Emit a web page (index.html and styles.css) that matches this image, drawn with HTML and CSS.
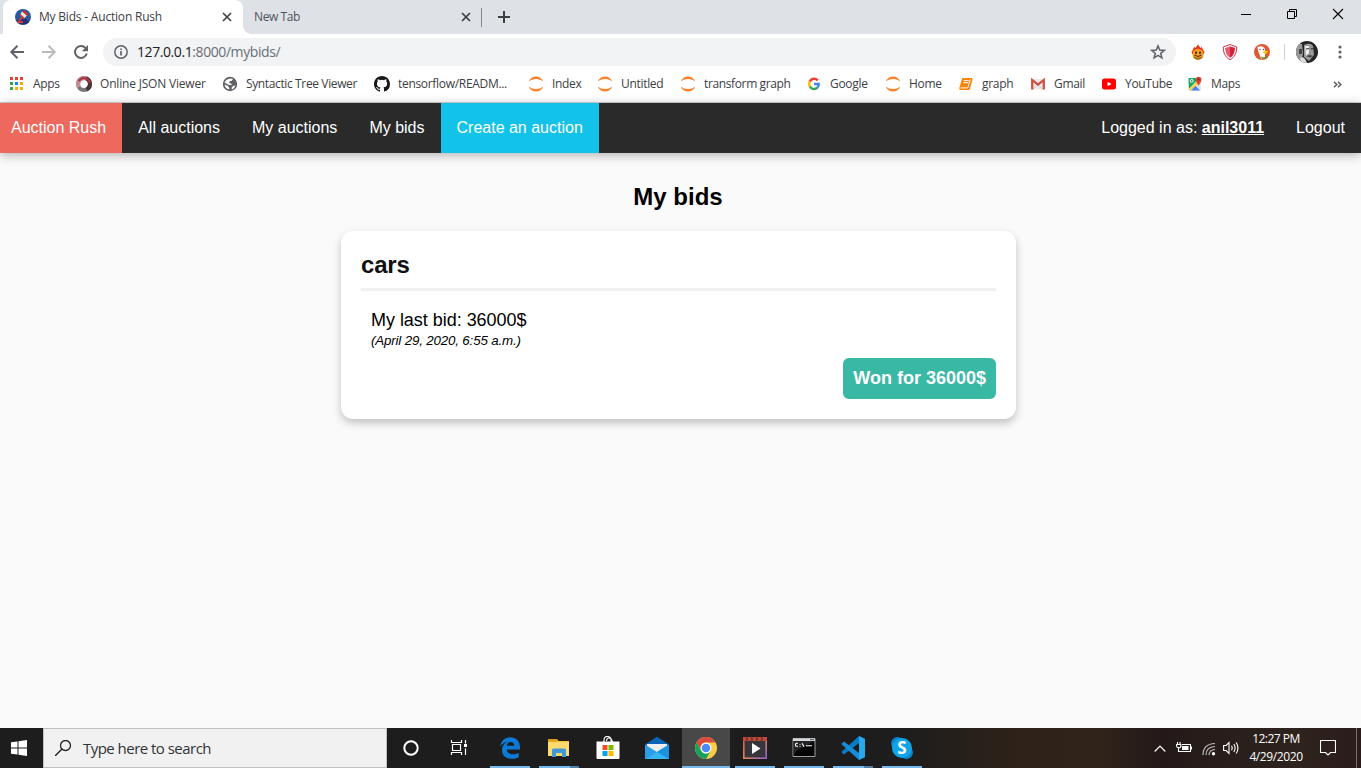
FILE: index.html
```html
<!DOCTYPE html>
<html lang="en">
<head>
<meta charset="utf-8">
<title>My Bids - Auction Rush</title>
<link rel="stylesheet" href="styles.css">
</head>
<body>
<svg class="defs" width="0" height="0">
  <symbol id="jupyter" viewBox="0 0 16 16"><path d="M.7 5.600C2 2.300 4.800 .5 8 .5s6 1.800 7.300 5.100C13.300 3.900 10.800 3 8 3S2.700 3.900 .7 5.600zM.7 10.600c1.300 3.200 4.100 5 7.300 5s6-1.800 7.300-5c-2 1.700-4.500 2.500-7.300 2.500s-5.300-.8-7.300-2.500z" fill="#f9822f"/></symbol>
</svg>
<div class="screen">
  <header class="browser">
    <div class="tabs">
      <div class="tab active">
        <svg class="i16" viewBox="0 0 16 16"><circle cx="8" cy="8" r="8" fill="#2b5a9b"/><path d="M1 11a8 8 0 0 0 13 2l-4-4z" fill="#252f73"/><path d="M3.500 12.500 8.500 7" stroke="#e7352f" stroke-width="1.800"/><path d="m7 2.500 5 4-3 3-4-3.500z" fill="#f5e7dc"/><path d="m9 1 4.500 4.500-1.500 1.500L7.800 2.500z" fill="#d82f30"/><path d="m5.500 5 4 4-1 1-4-4z" fill="#d82f30"/><path d="M2 13.500 8 13" stroke="#e3483e" stroke-width="1.500"/></svg>
        <span class="tab-title">My Bids - Auction Rush</span>
        <svg class="close" viewBox="0 0 10 10"><path d="m1 1 8 8M9 1 1 9" stroke="#3c4043" stroke-width="1.700"/></svg>
      </div>
      <div class="tab idle">
        <span class="tab-title">New Tab</span>
        <svg class="close" viewBox="0 0 10 10"><path d="m1 1 8 8M9 1 1 9" stroke="#3c4043" stroke-width="1.700"/></svg>
      </div>
      <svg class="plus" viewBox="0 0 12 12"><path d="M6 0v12M0 6h12" stroke="#3c4043" stroke-width="2"/></svg>
      <div class="window-buttons">
        <svg viewBox="0 0 12 12"><path d="M1 6.500h10" stroke="#000"/></svg>
        <svg viewBox="0 0 12 12"><path d="M1.500 3.500h7v7h-7zM3.500 3V1.500h7v7H9" fill="none" stroke="#000"/></svg>
        <svg viewBox="0 0 12 12"><path d="m1 1 10 10M11 1 1 11" stroke="#000" stroke-width="1.100"/></svg>
      </div>
    </div>
    <div class="toolbar">
      <svg class="nav-icon" viewBox="0 0 16 16"><path d="M15 8H2.500M8.500 1.800 2.300 8l6.200 6.200" fill="none" stroke="#5f6368" stroke-width="2"/></svg>
      <svg class="nav-icon" viewBox="0 0 16 16"><path d="M1 8h12.500M7.500 1.800 13.700 8l-6.200 6.200" fill="none" stroke="#babcbe" stroke-width="2"/></svg>
      <svg class="nav-icon" viewBox="0 0 16 16"><path d="M13.800 9.500a6 6 0 1 1-1.300-5.600" fill="none" stroke="#5f6368" stroke-width="2"/><path d="M15 1v6.200H8.800z" fill="#5f6368"/></svg>
      <div class="omnibox">
        <svg class="i14" viewBox="0 0 14 14"><circle cx="7" cy="7" r="6.200" fill="none" stroke="#5f6368" stroke-width="1.500"/><path d="M7 6v4.500M7 3.500V5" stroke="#5f6368" stroke-width="1.700"/></svg>
        <span class="url"><span class="host">127.0.0.1</span>:8000/mybids/</span>
        <svg class="i16" viewBox="0 0 16 16"><path d="m8 1.900 1.700 4.200 4.500.3-3.500 2.900 1.200 4.500L8 11.300l-3.900 2.500 1.200-4.500-3.500-2.900 4.500-.3z" fill="none" stroke="#5f6368" stroke-width="1.500"/></svg>
      </div>
      <div class="extensions">
        <svg class="i16" viewBox="0 0 16 16"><path d="M8 0c.5 2 2 2.500 2.300 4l1.200-1.200c.2 1.500 2 2.500 1.800 4l1-.4c0 1 .2 2-.5 3.600H2.300C1.500 8.500 1.700 7.400 2 6.400l.8.4C2.500 5 4 4 4.300 2.800L5.500 4C6 2.600 7.600 2 8 0z" fill="#e8361c"/><circle cx="8" cy="10.200" r="5.500" fill="#f4a01b"/><path d="M2.700 12.300a5.800 5.800 0 0 0 10.600 0Q8 15.200 2.700 12.300z" fill="#a86b16"/><ellipse cx="6" cy="8.800" rx="1" ry="1.300" fill="#3d2510"/><ellipse cx="10" cy="8.800" rx="1" ry="1.300" fill="#3d2510"/><path d="M4.500 11.200q3.500 2.500 7 0" fill="none" stroke="#3d2510"/></svg>
        <svg class="i16" viewBox="0 0 16 16"><path d="M8 .5 14.700 3c0 6-1.700 10-6.700 12.700C3 13 1.300 9 1.300 3z" fill="#fff" stroke="#dc2d45"/><path d="M8 2.500 12.900 4c-.2 4.500-1.500 7.500-4.900 9.700C4.600 11.500 3.300 8.500 3.100 4z" fill="#e45c70"/><path d="M8 2.500 12.900 4c-.2 4.500-1.500 7.500-4.900 9.700z" fill="#d91f3a"/></svg>
        <svg class="i16" viewBox="0 0 16 16"><circle cx="8" cy="8" r="8" fill="#de5833"/><path d="M3.500 3C6 1.500 11 2 11 6v7l-3.700 2.500C6.500 12 3.500 7 3.500 3z" fill="#fff"/><circle cx="9.500" cy="5.500" r=".8" fill="#2d4f8e"/><circle cx="6" cy="5.500" r=".7" fill="#2d4f8e"/><path d="M9 7.800c2-1.500 4-1 5.500 0-1 .8-2 .7-2.800 1l1.300.8c-1.500.8-4.500.2-4-1.800z" fill="#fdd20a"/><path d="m7 12.500 3 1 2.500-1.500-.2 3-2-.7-2.500.8z" fill="#45a331"/></svg>
      </div>
      <svg class="avatar" viewBox="0 0 22 22"><clipPath id="round"><circle cx="11" cy="11" r="11"/></clipPath><g clip-path="url(#round)"><path d="M0 0h22v22H0z" fill="#262626"/><path d="M0 5q3-3 6-2l1 10-2 8H0z" fill="#999"/><path d="M3 8h3v5H3z" fill="#444"/><path d="M8 4q7-3 9 1l1 9-5 6-5-4z" fill="#9a9a9a"/><path d="M9 5h4v7l-3 3z" fill="#ededed"/><path d="m10 8 3-.5M14.500 8l3-.5" stroke="#333" stroke-width="1.200"/><path d="m10 15 4-1 3 1-3 1.500z" fill="#444"/><path d="M4 17q4-3 7 5H5z" fill="#ddd"/></g></svg>
      <svg class="kebab" viewBox="0 0 4 14"><g fill="#5f6368"><circle cx="2" cy="2" r="1.600"/><circle cx="2" cy="7" r="1.600"/><circle cx="2" cy="12" r="1.600"/></g></svg>
    </div>
    <div class="bookmarks">
      <div class="bm"><svg class="i16" viewBox="0 0 16 16"><path d="M1 1h3v3H1zm5 0h3v3H6zm5 0h3v3h-3z" fill="#ea4335"/><path d="M1 6h3v3H1zm0 5h3v3H1z" fill="#34a853"/><path d="M6 6h3v3H6z" fill="#1e88f5"/><path d="M11 6h3v3h-3zm-5 5h3v3H6zm5 0h3v3h-3z" fill="#fbab05"/></svg><span>Apps</span></div>
      <div class="bm"><svg class="i16" viewBox="0 0 16 16"><circle cx="8" cy="8" r="6" fill="none" stroke="#777" stroke-width="4"/><path d="M10 2.400A6 6 0 0 1 10.500 13.500" fill="none" stroke="#443735" stroke-width="4"/><path d="M3 11A6 6 0 0 1 10 2.400" fill="none" stroke="#c98c91" stroke-width="4"/><path d="M2.500 5Q6 .8 10 2.500q3 1 4 4.500" fill="none" stroke="#a93544" stroke-width="2"/></svg><span>Online JSON Viewer</span></div>
      <div class="bm"><svg class="i16" viewBox="0 0 16 16"><circle cx="8" cy="8" r="7.200" fill="#5f6368"/><path d="M8.500 2.500 11 3 9.500 5H8L7 7l2 .5 1 1.500H7L5 8 2.500 6.500Q4 3 8.500 2.500zM2.500 8.500 6 10l1 1.500.5 2Q3.500 13 2.500 8.500zM11 10l2.500-.5Q12.500 12.500 10 13.500L9.500 12z" fill="#fff"/></svg><span>Syntactic Tree Viewer</span></div>
      <div class="bm"><svg class="i16" viewBox="0 0 16 16"><path fill="#191717" d="M8 0C3.580 0 0 3.580 0 8c0 3.540 2.290 6.530 5.470 7.590.4.070.55-.17.55-.38 0-.19-.01-.82-.01-1.490-2.010.37-2.530-.49-2.690-.94-.09-.23-.48-.94-.82-1.130-.28-.15-.68-.52-.01-.53.63-.01 1.080.58 1.230.82.72 1.210 1.870.87 2.330.66.070-.52.28-.87.51-1.070-1.780-.2-3.640-.89-3.640-3.950 0-.87.31-1.590.82-2.150-.08-.2-.36-1.020.08-2.120 0 0 .67-.21 2.200.82a7.600 7.600 0 0 1 4 0c1.530-1.040 2.200-.82 2.200-.82.44 1.100.16 1.920.08 2.120.51.56.82 1.270.82 2.150 0 3.070-1.870 3.750-3.650 3.950.29.25.54.73.54 1.480 0 1.070-.01 1.930-.01 2.200 0 .21.15.46.55.38A8.010 8.010 0 0 0 16 8c0-4.420-3.580-8-8-8z"/></svg><span>tensorflow/READM...</span></div>
      <div class="bm"><svg class="i16"><use href="#jupyter"/></svg><span>Index</span></div>
      <div class="bm"><svg class="i16"><use href="#jupyter"/></svg><span>Untitled</span></div>
      <div class="bm"><svg class="i16"><use href="#jupyter"/></svg><span>transform graph</span></div>
      <div class="bm"><svg class="i16" viewBox="0 0 16 16"><g fill="none" stroke-width="2.500"><path d="M11.800 4.300A4.900 4.900 0 0 0 3.800 5.500" stroke="#ea4335"/><path d="M3.800 5.500a4.900 4.900 0 0 0 0 5" stroke="#fbbc05"/><path d="M3.800 10.500a4.900 4.900 0 0 0 7.600 1.200" stroke="#34a853"/><path d="M11.400 11.700A4.600 4.600 0 0 0 12.700 8H8" stroke="#4285f4"/></g></svg><span>Google</span></div>
      <div class="bm"><svg class="i16"><use href="#jupyter"/></svg><span>Home</span></div>
      <div class="bm"><svg class="i16" viewBox="0 0 16 16"><path d="M4.500 2H14l.500 1.500L12 13q-.3 1-1.500 1H2.500Q1 14 1.300 12L4 3z" fill="#f98307"/><path d="M5.800 4.600h5M5.200 6.700h5M2.500 11.900h7.300l2.500-8.500" fill="none" stroke="#fff"/></svg><span>graph</span></div>
      <div class="bm"><svg class="i16" viewBox="0 0 16 16"><path d="M2 3h12v10.500H2z" fill="#eaeaea"/><path d="m3 13 5-4 5 4" fill="none" stroke="#ccc"/><path d="M2.200 13.500V4L8 8.700 13.800 4v9.500" fill="none" stroke="#d54b3d" stroke-width="2.200"/></svg><span>Gmail</span></div>
      <div class="bm"><svg class="i16" viewBox="0 0 16 16"><rect x="1" y="2.500" width="14" height="11" rx="2.500" fill="#f00"/><path d="m6.500 5.700 4 2.300-4 2.300z" fill="#fff"/></svg><span>YouTube</span></div>
      <div class="bm"><svg class="i16" viewBox="0 0 16 16"><path d="M1.500 2h12v12.500h-12z" fill="#d8dce0"/><path d="M1.500 2H12L2 13z" fill="#1fa463"/><path d="m3 14.500 5-5 5 5z" fill="#4285f4"/><path d="m2 13 9-9 1.500 1.500L3.500 15" fill="#fdd835"/><path d="m9 9 4.500 5V9z" fill="#dfe1e5"/><circle cx="4.700" cy="4.800" r="1.400" fill="none" stroke="#fff"/><path d="M11.500 10C11 7.500 8.700 6.500 8.700 3.700a2.900 2.900 0 0 1 5.800 0c0 2.800-2.500 3.800-3 6.300z" fill="#db4437"/><circle cx="11.600" cy="3.600" r="1" fill="#7b231e"/></svg><span>Maps</span></div>
      <svg class="overflow" viewBox="0 0 9 7"><path d="m1 .7 2.800 2.800L1 6.300M5 .7l2.800 2.800L5 6.300" fill="none" stroke="#5f6368" stroke-width="1.600"/></svg>
    </div>
  </header>

  <nav class="site-nav">
    <a class="brand">Auction Rush</a>
    <a>All auctions</a>
    <a>My auctions</a>
    <a>My bids</a>
    <a class="create">Create an auction</a>
    <span class="user">Logged in as: <b>anil3011</b></span>
    <a>Logout</a>
  </nav>

  <main class="page">
    <h1>My bids</h1>
    <article class="card">
      <h2>cars</h2>
      <div class="bid">My last bid: 36000$</div>
      <div class="date">(April 29, 2020, 6:55 a.m.)</div>
      <div class="won">Won for 36000$</div>
    </article>
  </main>

  <footer class="taskbar">
    <div class="start"><svg class="i16" viewBox="0 0 16 16"><path d="M0 2.300 6.500 1.400v6.100H0zM7.500 1.200 16 0v7.500H7.500zM0 8.500h6.500v6.100L0 13.700zM7.500 8.500H16V16l-8.500-1.200z" fill="#fff"/></svg></div>
    <div class="search">
      <svg viewBox="0 0 16 16"><circle cx="10.500" cy="5.500" r="5" fill="none" stroke="#222" stroke-width="1.300"/><path d="M7 9 0 16" stroke="#222" stroke-width="1.400"/></svg>
      <span>Type here to search</span>
    </div>
    <div class="apps">
      <div class="app"><svg viewBox="0 0 24 24"><circle cx="12" cy="12" r="6.700" fill="none" stroke="#fff" stroke-width="2"/></svg></div>
      <div class="app"><svg viewBox="0 0 24 24"><path d="M3.500 4v2.500h10V4M3.500 19v-2.500h10V19M4.500 8.500h8v6h-8zM17.500 4v3.500M17.500 12.500V19" fill="none" stroke="#fff" stroke-width="1.200"/><path d="M16 8h3v3h-3z" fill="#fff"/></svg></div>
      <div class="app open shift"><svg viewBox="0 0 24 24"><path d="M2 10.500C3.300 4.500 7 1.200 12.300 1.200c6 0 9.700 4.200 9.700 10v2.300H8.700c.3 3.300 3.200 4.700 6.200 4.700 2.200 0 4-.5 5.800-1.500v4.500c-2 1-4.300 1.600-6.900 1.600-6 0-9.800-3.500-9.800-8.800 0-3.800 2-6.800 5.400-8.400C6 6.500 3.700 8.300 2 10.500zm6.700-.8h7.500c0-2.300-1.300-3.700-3.500-3.700-2 0-3.500 1.400-4 3.700z" fill="#0b7ad7"/></svg></div>
      <div class="app open multi"><svg viewBox="0 0 24 24"><path d="M1 3h9l1.500 2H22v15H1z" fill="#f5bd35"/><path d="M1 6h21v14H1z" fill="#ffda6c"/><path d="M1 3h9v2.500H1z" fill="#dc9e13"/><path d="M5 21v-7q0-1.500 1.500-1.500h11q1.500 0 1.500 1.500v7h-4v-4H9v4z" fill="#3f99d8"/></svg></div>
      <div class="app"><svg viewBox="0 0 24 24"><path d="M8 6V4q0-3.500 3.500-3.500T15 4v2M10.500 5q0-3 2.500-3t3.500 4" fill="none" stroke="#fff" stroke-width="1.100"/><path d="M.5 5.500h23V22q0 1-1 1h-21q-1 0-1-1z" fill="#fff"/><path d="M6.500 9h5v5h-5z" fill="#f04e24"/><path d="M12.500 9h5v5h-5z" fill="#7db900"/><path d="M6.500 15h5v5h-5z" fill="#00a3ee"/><path d="M12.500 15h5v5h-5z" fill="#ffb800"/></svg></div>
      <div class="app"><svg viewBox="0 0 24 24"><path d="M0 8.500 12 .8l12 7.700V23H0z" fill="#0865b5"/><path d="M2 8h20v8H2z" fill="#eee"/><path d="M0 8.500 12 16 0 23z" fill="#2d9de5"/><path d="M24 8.500V23H0z" fill="#36b6f3"/><path d="m12 16 12 7V8.500z" fill="#1b91e0"/></svg></div>
      <div class="app open current"><svg viewBox="0 0 24 24"><circle cx="12" cy="12" r="11" fill="#fbcd43"/><path d="M2.500 6.500A11 11 0 0 1 21.500 6.500H12A5.500 5.500 0 0 0 7.200 14.700z" fill="#db4a3d"/><path d="M2.500 6.500A11 11 0 0 0 12 23l4.800-8.300a5.500 5.500 0 0 1-9.600 0z" fill="#18a05e"/><circle cx="12" cy="12" r="5.500" fill="#fff"/><circle cx="12" cy="12" r="4.300" fill="#4a8af4"/></svg></div>
      <div class="app open"><svg viewBox="0 0 24 24"><defs><linearGradient id="film" x1="0" y1="0" x2="1" y2="1"><stop stop-color="#d9564a"/><stop offset=".5" stop-color="#e88457"/><stop offset="1" stop-color="#8f62cf"/></linearGradient></defs><rect x=".8" y="1.800" width="22.400" height="20.400" fill="#35353b" stroke="url(#film)" stroke-width="1.600"/><path d="M0 1h24v4H0z" fill="#c4493a"/><path d="m3 1 1.500 2L3 5m5-4 1.500 2L8 5m5-4 1.500 2L13 5m5-4 1.500 2L18 5" fill="none" stroke="#78352b" stroke-width="1.600"/><path d="M9 7v11l8.500-5.500z" fill="#fff"/></svg></div>
      <div class="app open"><svg viewBox="0 0 24 24"><path d="M1 2.500h22v18H1z" fill="#050505" stroke="#9ba0a2"/><path d="M1 2.500h22v2.500H1z" fill="#d6dadd"/><path d="M18 3.700h4" stroke="#555"/><path d="M1.500 5h21L4 15l-2.500 5z" fill="#262626"/><path d="M6 7.300H4.500q-1 0-1 1v1q0 1 1 1H6M8 8v.7M8 10v.7M10 7.300l2 3.500M14 9.800h6" fill="none" stroke="#fff" stroke-width="1.100"/></svg></div>
      <div class="app open multi"><svg viewBox="0 0 24 24"><path d="m18 0 6 2.700v18.600L18 24z" fill="#27a9f2"/><path d="M18 0v7L3 18.500.3 16z" fill="#087bc3"/><path d="M18 24v-7L3 5.500.3 8z" fill="#168dd8"/></svg></div>
      <div class="app open"><svg viewBox="0 0 24 24"><circle cx="7.500" cy="7.500" r="6.500" fill="#0a84cf"/><circle cx="16.500" cy="16.500" r="6.500" fill="#0a84cf"/><circle cx="12" cy="12" r="10" fill="#10a5e7"/></svg><b class="skype-s">S</b></div>
    </div>
    <div class="tray">
      <svg class="chevron" viewBox="0 0 12 7"><path d="m.7 6.500 5.300-5.300 5.300 5.300" fill="none" stroke="#fff" stroke-width="1.200"/></svg>
      <svg class="i16" viewBox="0 0 16 16"><path d="M6 4.500h8.500v7H5M15.500 6.500v3M2.500 8v3.500H5M1.500 2v2.500M4 2v2.500M.6 4.500h4.300v1.500q0 1.800-2.100 1.800T.6 6z" fill="none" stroke="#fff" stroke-width="1.100"/><path d="M6 6h6.500v4H6z" fill="#fff"/></svg>
      <svg class="wifi" viewBox="0 0 14 14"><g fill="none" stroke="#bbb" stroke-width="1.200"><path d="M1 13Q1 2 13 1.500M4 13Q4 5 13 4.500M7 13q0-5 6-5.500"/></g><circle cx="11.500" cy="11.800" r="1.700" fill="#fff"/></svg>
      <svg class="i16" viewBox="0 0 16 16"><path d="M.6 5.500h2.500L6 2.500v11l-2.900-3H.6zM8.500 5.800q1.400 2.200 0 4.400M10.800 4q2.600 4 0 8M13.200 2.500q3.500 5.500 0 11" fill="none" stroke="#fff" stroke-width="1.100"/></svg>
      <div class="clock"><span class="time">12:27 PM</span><span class="day">4/29/2020</span></div>
      <svg class="i16" viewBox="0 0 16 16"><path d="M.5 .5h15v12h-5L8 15l-2.500-2.500h-5z" fill="none" stroke="#fff" stroke-width="1.100"/></svg>
    </div>
  </footer>
</div>
</body>
</html>
```
FILE: styles.css
```css
* { box-sizing: border-box; }
body { margin: 0; font-family: "Liberation Sans", Arial, sans-serif; }
svg { display: block; flex-shrink: 0; }
.defs { position: absolute; }
.i16 { width: 16px; height: 16px; }
.i14 { width: 14px; height: 14px; }

.screen { width: 1361px; height: 768px; display: flex; flex-direction: column; overflow: hidden; background: #fafafa; }
.browser { height: 103px; flex-shrink: 0; border-bottom: 1px solid #d2d2d4; background: #fff; font-family: "Open Sans", "Noto Sans", sans-serif; color: #3c4043; }

.tabs { height: 34px; padding-left: 3px; display: flex; align-items: center; background: #dee1e6; }
.tab { height: 34px; display: flex; align-items: center; font-size: 12px; letter-spacing: -0.2px; }
.tab.active { width: 240px; padding: 0 11px 0 12px; gap: 8px; background: #fff; border-radius: 8px 8px 0 0; }
.tab.idle { width: 239px; padding: 0 11px; position: relative; color: #50545a; letter-spacing: -0.4px; }
.tab.idle::before { content: ""; position: absolute; left: 0; bottom: 0; width: 8px; height: 8px; background: radial-gradient(circle at 100% 0, #dee1e6 7.500px, #fff 8px); }
.tab.idle::after { content: ""; position: absolute; right: 0; top: 8px; width: 1px; height: 19px; background: #84878b; }
.tab-title { flex: 1; padding-bottom: 2px; white-space: nowrap; }
.close { width: 10px; height: 10px; }
.plus { width: 12px; height: 12px; margin-left: 16px; }
.window-buttons { margin: -6px 17px 0 auto; display: flex; gap: 34px; }
.window-buttons svg { width: 12px; height: 12px; }

.toolbar { height: 36px; padding: 0 19px 0 9px; display: flex; align-items: center; }
.nav-icon { width: 16px; height: 16px; margin-right: 16px; }
.omnibox { width: 1073px; height: 28px; margin-left: -2px; padding: 0 10px 0 11px; display: flex; align-items: center; border-radius: 14px; background: #f1f3f4; }
.url { flex: 1; margin-left: 9px; padding-bottom: 2px; font-size: 14px; letter-spacing: -0.42px; color: #6b6f74; }
.host { color: #202124; }
.extensions { display: flex; gap: 16px; margin-left: 14px; padding-right: 14px; border-right: 1px solid #cfd1d3; }
.avatar { width: 22px; height: 22px; margin-left: 11px; }
.kebab { width: 4px; height: 14px; margin-left: auto; }

.bookmarks { height: 28px; padding-left: 9px; display: grid; grid-template-columns: 67px 146px 152px 154px 69px 83px 126px 79px 73px 72px 71px 86px 146px 9px; align-items: center; }
.bm { display: flex; align-items: center; gap: 8px; font-size: 12px; letter-spacing: -0.31px; white-space: nowrap; }
.bm span { padding-bottom: 2px; }
.bm:nth-child(2) { letter-spacing: -0.19px; }
.bm:nth-child(3), .bm:nth-child(7) { letter-spacing: -0.37px; }
.overflow { width: 9px; height: 7px; }

.site-nav { position: relative; height: 50px; flex-shrink: 0; display: flex; background: #2a2a2a; color: #fff; font-size: 16px; line-height: 50px; box-shadow: 0 2px 10px rgba(0,0,0,.3); }
.site-nav > * { padding: 0 16px; white-space: nowrap; }
.site-nav .brand { padding-left: 11px; background: #ed685d; }
.site-nav .create { background: #12c2e8; }
.user { margin-left: auto; }
.user b { text-decoration: underline; }

.page { flex: 1; width: 1357px; display: flex; flex-direction: column; align-items: center; }
h1 { margin: 30px 0 20px; padding-right: 1px; font-size: 24px; line-height: 28px; }
.card { width: 675px; height: 188px; padding: 20px; display: flex; flex-direction: column; border-radius: 12px; background: #fff; box-shadow: 0 4px 9px rgba(0,0,0,.23); color: #111; }
h2 { margin: 0 0 18px; padding-bottom: 9px; border-bottom: 3px solid #f0f0f0; font-size: 24px; line-height: 28px; letter-spacing: -0.2px; }
.bid { padding-left: 10px; font-size: 18px; line-height: 22px; letter-spacing: -0.03px; color: #000; }
.date { padding-left: 10px; font-size: 13.330px; line-height: 20px; letter-spacing: -0.16px; font-style: italic; color: #000; }
.won { margin-top: 7px; align-self: flex-end; padding: 0 10px; border-radius: 6px; background: #39b8a6; color: #fff; font-size: 18px; line-height: 41px; font-weight: bold; }

.taskbar { height: 40px; flex-shrink: 0; display: flex; background: linear-gradient(90deg, #1d1d1d 0, #1d1d1d 900px, #2e2219 1020px, #30231a 1100px, #231918 1160px, #2e231d 1300px, #2b1c1b 1361px); color: #fff; font-family: "Open Sans", "Noto Sans", sans-serif; }
.start { width: 43px; display: flex; align-items: center; padding-left: 11px; }
.search { width: 344px; border: 1px solid #c0c0c0; padding-left: 11px; display: flex; align-items: center; gap: 12px; background: #f1f1f1; color: #333; font-size: 15px; letter-spacing: -0.53px; }
.search svg { width: 16px; height: 16px; }
.apps { display: flex; gap: 1px; }
.app { width: 48px; height: 40px; display: grid; place-items: center; position: relative; }
.app.shift { margin-left: 1px; }
.app svg { width: 24px; height: 24px; }
.app.open::after { content: ""; position: absolute; left: 4px; bottom: 0; width: 40px; height: 2px; background: #76b9ed; }
.app.current { background: #484848; }
.app.current::after { left: 0; width: 48px; }
.app.multi::after { background: linear-gradient(90deg, #76b9ed 31px, #5181a8 31px); }
.skype-s { position: absolute; inset: 0; text-align: center; font-size: 17px; line-height: 39px; }
.tray { margin-left: auto; padding-right: 20px; border-right: 1px solid #786f69; margin-right: 4px; display: flex; align-items: center; }
.chevron { width: 12px; height: 7px; margin-right: 10px; }
.wifi { width: 14px; height: 14px; margin: 2px 7px 0 10px; }
.clock { width: 76px; display: flex; flex-direction: column; align-items: center; padding-right: 2px; font-size: 12px; line-height: 18px; white-space: nowrap; margin-right: 5px; }
.time { letter-spacing: -0.5px; }
.day { letter-spacing: -0.4px; }
```
